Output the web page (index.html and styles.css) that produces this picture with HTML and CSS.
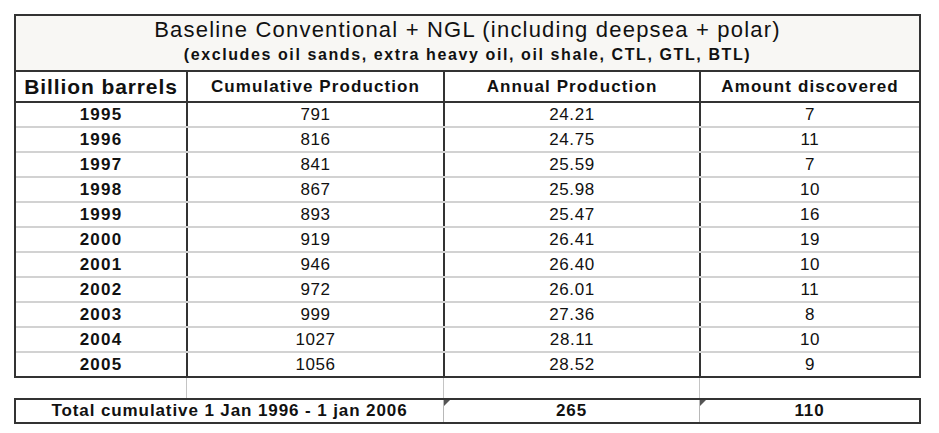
FILE: index.html
```html
<!DOCTYPE html>
<html lang="en">
<head>
<meta charset="utf-8">
<title>Baseline Conventional + NGL</title>
<link rel="stylesheet" href="styles.css">
</head>
<body>
<div class="sheet">
  <div class="table">
    <div class="title">
      <div class="title-main">Baseline Conventional + NGL (including deepsea + polar)</div>
      <div class="title-sub">(excludes oil sands, extra heavy oil, oil shale, CTL, GTL, BTL)</div>
    </div>
    <div class="row head">
      <div class="cell unit">Billion barrels</div>
      <div class="cell colhead">Cumulative Production</div>
      <div class="cell colhead">Annual Production</div>
      <div class="cell colhead">Amount discovered</div>
    </div>
    <div class="row first"><div class="cell year">1995</div><div class="cell num">791</div><div class="cell num">24.21</div><div class="cell num">7</div></div>
    <div class="row"><div class="cell year">1996</div><div class="cell num">816</div><div class="cell num">24.75</div><div class="cell num">11</div></div>
    <div class="row"><div class="cell year">1997</div><div class="cell num">841</div><div class="cell num">25.59</div><div class="cell num">7</div></div>
    <div class="row"><div class="cell year">1998</div><div class="cell num">867</div><div class="cell num">25.98</div><div class="cell num">10</div></div>
    <div class="row"><div class="cell year">1999</div><div class="cell num">893</div><div class="cell num">25.47</div><div class="cell num">16</div></div>
    <div class="row"><div class="cell year">2000</div><div class="cell num">919</div><div class="cell num">26.41</div><div class="cell num">19</div></div>
    <div class="row"><div class="cell year">2001</div><div class="cell num">946</div><div class="cell num">26.40</div><div class="cell num">10</div></div>
    <div class="row"><div class="cell year">2002</div><div class="cell num">972</div><div class="cell num">26.01</div><div class="cell num">11</div></div>
    <div class="row"><div class="cell year">2003</div><div class="cell num">999</div><div class="cell num">27.36</div><div class="cell num">8</div></div>
    <div class="row"><div class="cell year">2004</div><div class="cell num">1027</div><div class="cell num">28.11</div><div class="cell num">10</div></div>
    <div class="row"><div class="cell year">2005</div><div class="cell num">1056</div><div class="cell num">28.52</div><div class="cell num">9</div></div>
  </div>
  <div class="gap">
    <div class="gcell"></div><div class="gcell"></div><div class="gcell"></div><div class="gcell"></div>
  </div>
  <div class="total">
    <div class="tcell label">Total cumulative 1 Jan 1996 - 1 jan 2006</div>
    <div class="tcell flag">265</div>
    <div class="tcell flag">110</div>
  </div>
</div>
</body>
</html>
```

FILE: styles.css
```css
html, body {
  margin: 0;
  padding: 0;
  background: #ffffff;
}

body {
  font-family: "Liberation Sans", Arial, sans-serif;
  color: #111111;
}

.sheet {
  padding: 14px 0 0 14px;
  width: 907px;
}

.table {
  width: 907px;
  box-sizing: border-box;
  border: 2px solid #333333;
  background: #ffffff;
}

.title {
  background: #f8f7f4;
  border-bottom: 2px solid #333333;
  text-align: center;
  padding: 2px 0 5px;
}

.title-main {
  font-size: 22px;
  line-height: 24px;
  letter-spacing: 1.2px;
}

.title-sub {
  margin-top: 3px;
  font-size: 16px;
  line-height: 20px;
  font-weight: bold;
  letter-spacing: 1.6px;
}

.row {
  display: grid;
  grid-template-columns: 170px 257px 256px 220px;
  height: 25px;
  box-sizing: border-box;
  border-top: 2px solid #d2d2d2;
}

.row.head {
  height: 31px;
  border-top: none;
  border-bottom: 2px solid #333333;
}

.row.first {
  height: 23px;
  border-top: none;
}

.cell {
  display: flex;
  align-items: center;
  justify-content: center;
  box-sizing: border-box;
  white-space: nowrap;
}

.cell + .cell {
  border-left: 2px solid #333333;
}

.unit {
  font-size: 21px;
  font-weight: bold;
  letter-spacing: 0.9px;
}

.colhead {
  font-size: 17px;
  font-weight: bold;
  letter-spacing: 1.1px;
}

.year {
  font-size: 17px;
  font-weight: bold;
  letter-spacing: 1.2px;
}

.num {
  font-size: 17px;
  letter-spacing: 0.6px;
}

.gap {
  display: grid;
  grid-template-columns: 172px 257px 256px 222px;
  height: 20px;
}

.gcell + .gcell {
  border-left: 1px solid #c4c4c4;
}

.total {
  display: grid;
  grid-template-columns: 427px 256px 220px;
  width: 907px;
  height: 26px;
  box-sizing: border-box;
  border: 2px solid #333333;
}

.tcell {
  display: flex;
  align-items: center;
  justify-content: center;
  box-sizing: border-box;
  font-size: 17px;
  font-weight: bold;
  letter-spacing: 0.9px;
  white-space: nowrap;
}

.tcell.flag {
  position: relative;
  border-left: 1px solid #b8b8b8;
}

.tcell.flag::before {
  content: "";
  position: absolute;
  top: 0;
  left: 0;
  border-top: 6px solid #555555;
  border-right: 6px solid transparent;
}
```
